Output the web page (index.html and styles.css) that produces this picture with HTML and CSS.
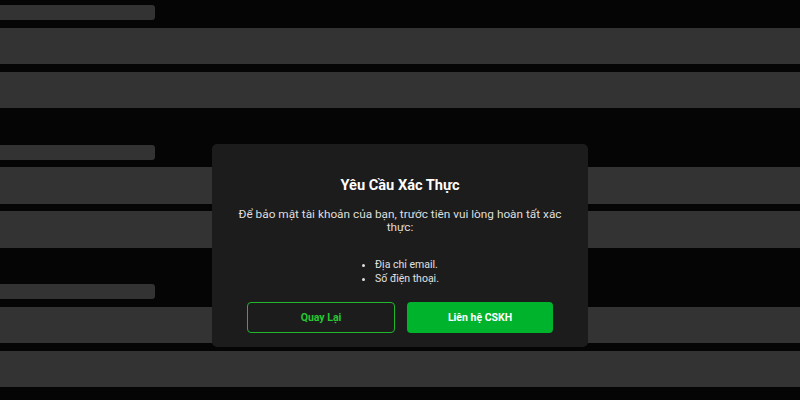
FILE: index.html
```html
<!DOCTYPE html>
<html lang="vi">
<head>
<meta charset="utf-8">
<title>Yêu Cầu Xác Thực</title>
<link rel="stylesheet" href="styles.css">
</head>
<body>
<main class="page">
  <section class="group">
    <div class="label"></div>
    <div class="block"></div>
    <div class="block"></div>
  </section>
  <section class="group">
    <div class="label"></div>
    <div class="block"></div>
    <div class="block"></div>
  </section>
  <section class="group">
    <div class="label"></div>
    <div class="block"></div>
    <div class="block"></div>
  </section>
</main>
<div class="modal" role="dialog">
  <h2 class="modal-title">Yêu Cầu Xác Thực</h2>
  <p class="modal-text">Để bảo mật tài khoản của bạn, trước tiên vui lòng hoàn tất xác thực:</p>
  <ul class="modal-list">
    <li>Địa chỉ email.</li>
    <li>Số điện thoại.</li>
  </ul>
  <div class="modal-actions">
    <button class="btn btn-outline">Quay Lại</button>
    <button class="btn btn-primary">Liên hệ CSKH</button>
  </div>
</div>
</body>
</html>
```

FILE: styles.css
```css
html, body {
  margin: 0;
  padding: 0;
  background: #050505;
  font-family: Roboto, "Noto Sans", Arial, sans-serif;
  overflow: hidden;
}

.page {
  padding-top: 5px;
}

.group {
  display: flex;
  flex-direction: column;
  gap: 7.5px;
  margin-bottom: 36.5px;
}

.group:last-child {
  margin-bottom: 0;
}

.label {
  width: 155px;
  height: 15px;
  background: #333333;
  border-radius: 0 3px 3px 0;
}

.block {
  height: 36.5px;
  background: #333333;
}

.modal {
  position: fixed;
  top: 144px;
  left: 212px;
  width: 376px;
  box-sizing: border-box;
  padding: 30px 20px 14px;
  background: #1c1c1c;
  border-radius: 5px;
  text-align: center;
  color: #ffffff;
}

.modal-title {
  margin: 0;
  font-size: 14.6px;
  line-height: 22px;
  font-weight: 700;
  color: #ffffff;
}

.modal-text {
  margin: 11.5px 0 0;
  font-size: 11.8px;
  line-height: 13px;
  color: #dedede;
}

.modal-list {
  width: fit-content;
  margin: 24.5px auto 0;
  padding-left: 14px;
  text-align: left;
  font-size: 10.5px;
  line-height: 14px;
  color: #e0e0e0;
}

.modal-actions {
  display: flex;
  gap: 12px;
  margin: 16px 15px 0;
}

.btn {
  flex: 1;
  height: 31px;
  border-radius: 4px;
  font-family: Roboto, "Noto Sans", Arial, sans-serif;
  font-size: 10.5px;
  font-weight: 700;
  cursor: pointer;
}

.btn-outline {
  background: transparent;
  border: 1.5px solid #22b82d;
  color: #27c733;
}

.btn-primary {
  background: #00b32c;
  border: none;
  color: #ffffff;
}
```
